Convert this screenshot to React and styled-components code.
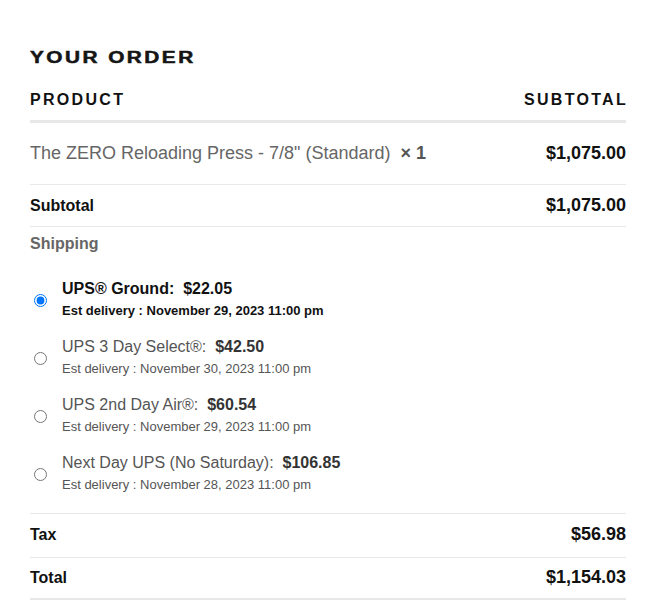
import styled, { createGlobalStyle } from "styled-components"

const GlobalStyle = createGlobalStyle`
  body {
    margin: 0;
    background: #fff;
    font-family: "Liberation Sans", Arial, sans-serif;
    color: #111;
  }
`

const Wrapper = styled.div`
  padding: 46px 0 0 30px;
  width: 596px;
`

const Heading = styled.h3`
  margin: 0 0 18px;
  line-height: 24px;
  font-size: 16px;
  font-weight: 900;
  letter-spacing: 1.9px;
  text-transform: uppercase;
  color: #151515;
  -webkit-text-stroke: 0.5px #151515;
  & > span {
    display: inline-block;
    transform: scaleX(1.3);
    transform-origin: left center;
  }
`

const HeadRow = styled.div`
  display: flex;
  justify-content: space-between;
  line-height: 24px;
  padding-bottom: 8px;
  border-bottom: 3px solid #e8e8e8;
  font-size: 16px;
  font-weight: 700;
  letter-spacing: 2.3px;
  text-transform: uppercase;
  color: #111;
  & > span:last-child {
    margin-right: -2px;
  }
`

const Row = styled.div`
  display: flex;
  justify-content: space-between;
  align-items: center;
  padding: ${props => props.$pad || "10px 0"};
  line-height: ${props => props.$lh || "21px"};
  border-bottom: ${props => props.$thick ? "3px" : "1px"} solid #e8e8e8;
`

const ProductName = styled.span`
  font-size: 18px;
  color: #666;
`

const Qty = styled.strong`
  color: #555;
  font-weight: 700;
`

const Label = styled.span`
  font-size: 16px;
  font-weight: 700;
  color: #111;
`

const Amount = styled.span`
  font-size: 18px;
  font-weight: 700;
  color: #111;
`

const ShippingBlock = styled.div`
  padding: 7px 0 17px;
  border-bottom: 1px solid #e8e8e8;
`

const ShippingTitle = styled.div`
  line-height: 20px;
  font-size: 16px;
  font-weight: 700;
  color: #666;
  margin-bottom: 24px;
`

const Options = styled.ul`
  list-style: none;
  margin: 0;
  padding: 0;
  display: flex;
  flex-direction: column;
  gap: 14px;
`

const Option = styled.li`
  display: flex;
  align-items: center;
  gap: 15px;
  padding-left: 4px;
  & input {
    margin: 0;
    width: 13px;
    height: 13px;
    flex: none;
  }
`

const OptionText = styled.label`
  display: flex;
  flex-direction: column;
  color: ${props => props.$active ? "#111" : "#555"};
  font-weight: ${props => props.$active ? 700 : 400};
`

const OptionTitle = styled.span`
  font-size: 16px;
  line-height: 22px;
  & b {
    font-weight: 700;
    color: ${props => props.$active ? "#111" : "#333"};
  }
`

const OptionEst = styled.span`
  font-size: 13px;
  line-height: 22px;
`

const shipping = [
  { id: "ground", name: "UPS® Ground:", price: "$22.05", est: "November 29, 2023 11:00 pm" },
  { id: "3day", name: "UPS 3 Day Select®:", price: "$42.50", est: "November 30, 2023 11:00 pm" },
  { id: "2day", name: "UPS 2nd Day Air®:", price: "$60.54", est: "November 29, 2023 11:00 pm" },
  { id: "next", name: "Next Day UPS (No Saturday):", price: "$106.85", est: "November 28, 2023 11:00 pm" },
]

export default function App() {
  const selected = "ground"

  return (
    <Wrapper>
      <GlobalStyle />
      <Heading><span>Your Order</span></Heading>
      <HeadRow>
        <span>Product</span>
        <span>Subtotal</span>
      </HeadRow>
      <Row $pad="18px 0" $lh="25px">
        <ProductName>
          The ZERO Reloading Press - 7/8" (Standard)&nbsp; <Qty>× 1</Qty>
        </ProductName>
        <Amount>$1,075.00</Amount>
      </Row>
      <Row>
        <Label>Subtotal</Label>
        <Amount>$1,075.00</Amount>
      </Row>
      <ShippingBlock>
        <ShippingTitle>Shipping</ShippingTitle>
        <Options>
          {shipping.map(s => {
            const active = s.id === selected
            return (
              <Option key={s.id}>
                <input type="radio" name="ship" id={s.id} defaultChecked={active} />
                <OptionText htmlFor={s.id} $active={active}>
                  <OptionTitle $active={active}>
                    {s.name}&nbsp; <b>{s.price}</b>
                  </OptionTitle>
                  <OptionEst>Est delivery : {s.est}</OptionEst>
                </OptionText>
              </Option>
            )
          })}
        </Options>
      </ShippingBlock>
      <Row $pad="10px 0 12px">
        <Label>Tax</Label>
        <Amount>$56.98</Amount>
      </Row>
      <Row $pad="9px 0 10px" $thick>
        <Label>Total</Label>
        <Amount>$1,154.03</Amount>
      </Row>
    </Wrapper>
  )
}
